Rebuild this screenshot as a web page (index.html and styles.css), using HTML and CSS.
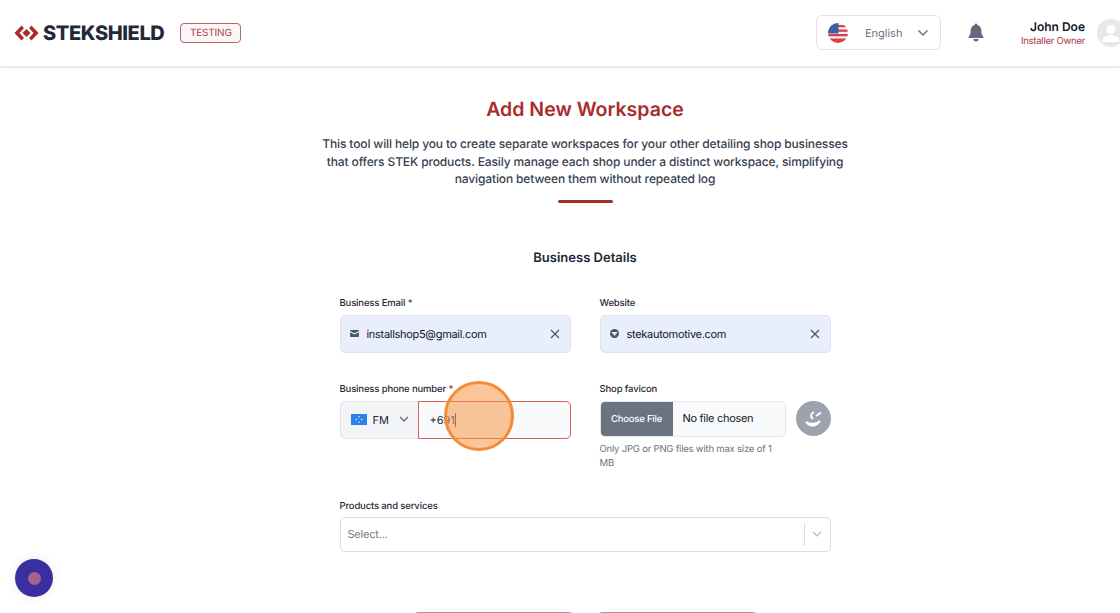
FILE: index.html
```html
<!DOCTYPE html>
<html lang="en">
<head>
    <meta charset="UTF-8">
    <title>Add New Workspace</title>
    <link rel="stylesheet" href="styles.css">
</head>
<body>
    <header class="topbar">
        <div class="brand">
            <svg class="brand-mark" width="25" height="16" viewBox="0 0 25 16">
                <path d="M7.500 0.500 L0.500 8 L7.500 15.500 L10 13 L5.500 8 L10 3 Z" fill="#a82c2c"/>
                <path d="M17.500 0.500 L24.500 8 L17.500 15.500 L15 13 L19.500 8 L15 3 Z" fill="#a82c2c"/>
                <path d="M12.500 4 L16.500 8 L12.500 12 L8.500 8 Z" fill="#a82c2c"/>
            </svg>
            <span class="brand-name">STEKSHIELD</span>
            <span class="env-badge">TESTING</span>
        </div>
        <div class="topbar-right">
            <div class="lang-select">
                <svg class="flag" width="20" height="20" viewBox="0 0 20 20">
                    <defs><clipPath id="flagClip"><circle cx="10" cy="10" r="10"/></clipPath></defs>
                    <g clip-path="url(#flagClip)">
                        <rect width="20" height="20" fill="#f3f3f3"/>
                        <rect y="2" width="20" height="2.300" fill="#d8404a"/>
                        <rect y="6.500" width="20" height="2.300" fill="#d8404a"/>
                        <rect y="11" width="20" height="2.300" fill="#d8404a"/>
                        <rect y="15.500" width="20" height="4.500" fill="#d8404a"/>
                        <rect width="10.500" height="10.500" fill="#3f5fa8"/>
                    </g>
                </svg>
                <span class="lang-name">English</span>
                <svg width="12" height="8" viewBox="0 0 12 8"><path d="M1.500 1.500 L6 6 L10.500 1.500" class="chev"/></svg>
            </div>
            <svg class="bell" width="16" height="19" viewBox="0 0 16 19">
                <path d="M8 0.500 a1.300 1.300 0 0 1 1.300 1.500 C12 2.700 13.400 5 13.400 8 c0 3.500 1 4.700 2.100 6 v1 H0.500 v-1 c1.100-1.300 2.100-2.500 2.100-6 C2.600 5 4 2.700 6.700 2 A1.300 1.300 0 0 1 8 0.500 Z M5.500 16 h5 a2.500 2.500 0 0 1-5 0 Z" fill="#626b79"/>
            </svg>
            <div class="user-info">
                <span class="user-name">John Doe</span>
                <span class="user-role">Installer Owner</span>
            </div>
            <svg class="avatar" width="28" height="28" viewBox="0 0 28 28">
                <circle cx="14" cy="14" r="14" fill="#e8e8e8"/>
                <circle cx="14" cy="10.500" r="4.500" fill="#fff"/>
                <path d="M5.500 23 c0-5 3.500-7 8.500-7 s8.500 2 8.500 7 Z" fill="#fff"/>
            </svg>
        </div>
    </header>

    <main class="page">
        <h1 class="page-title">Add New Workspace</h1>
        <p class="page-intro">This tool will help you to create separate workspaces for your other detailing shop businesses that offers STEK products. Easily manage each shop under a distinct workspace, simplifying navigation between them without repeated log</p>
        <div class="title-rule"></div>

        <h2 class="section-title">Business Details</h2>

        <form class="form">
            <div class="form-row">
                <div class="field">
                    <label class="field-label">Business Email <span class="req">*</span></label>
                    <div class="input filled">
                        <svg class="input-icon" width="9" height="7" viewBox="0 0 10 8"><path d="M0.500 0 h9 a0.500 0.500 0 0 1 0.500 0.500 v0.700 L5 3.800 L0 1.200 V0.500 A0.500 0.500 0 0 1 0.500 0 Z M0 2.500 L5 5 L10 2.500 V7.500 a0.500 0.500 0 0 1-0.500 0.500 h-9 A0.500 0.500 0 0 1 0 7.500 Z" fill="#4b5563"/></svg>
                        <span class="input-text">installshop5@gmail.com</span>
                        <svg class="clear" width="10" height="10" viewBox="0 0 10 10"><path d="M1 1 L9 9 M9 1 L1 9"/></svg>
                    </div>
                </div>
                <div class="field">
                    <label class="field-label">Website</label>
                    <div class="input filled">
                        <svg class="input-icon" width="9" height="9" viewBox="0 0 9 9"><circle cx="4.500" cy="4.500" r="4.500" fill="#4b5563"/><path d="M1.500 3 h6 c0 1-1 1.500-1.500 1.500 L5 7 C3.500 6 3 5 3 4.500 C2 4.500 1.500 4 1.500 3 Z" fill="#e8eefc"/></svg>
                        <span class="input-text">stekautomotive.com</span>
                        <svg class="clear" width="10" height="10" viewBox="0 0 10 10"><path d="M1 1 L9 9 M9 1 L1 9"/></svg>
                    </div>
                </div>
            </div>

            <div class="form-row second">
                <div class="field">
                    <label class="field-label">Business phone number <span class="req">*</span></label>
                    <div class="phone">
                        <div class="phone-country">
                            <svg width="16" height="11" viewBox="0 0 16 11">
                                <rect width="16" height="11" fill="#2f80ed"/>
                                <circle cx="8" cy="2.800" r="0.700" fill="#fff"/>
                                <circle cx="8" cy="8.200" r="0.700" fill="#fff"/>
                                <circle cx="5.300" cy="5.500" r="0.700" fill="#fff"/>
                                <circle cx="10.700" cy="5.500" r="0.700" fill="#fff"/>
                            </svg>
                            <span>FM</span>
                            <svg width="10" height="7" viewBox="0 0 10 7"><path d="M1 1 L5 5 L9 1" class="chev"/></svg>
                        </div>
                        <div class="phone-number"><span>+691</span><span class="caret"></span></div>
                    </div>
                </div>
                <div class="field">
                    <label class="field-label">Shop favicon</label>
                    <div class="favicon-row">
                        <div class="file-input">
                            <span class="file-btn">Choose File</span>
                            <span class="file-name">No file chosen</span>
                        </div>
                        <svg class="favicon-preview" width="35" height="35" viewBox="0 0 35 35">
                            <circle cx="17.500" cy="17.500" r="17.500" fill="#9ca3af"/>
                            <path d="M18 11 C14.500 13 14 16 17 18 M20 15 L25 11.500" class="favicon-mark"/>
                            <path d="M10 21 C13 25 19 27 24 20 C21 23 15 24 10 21 Z" class="favicon-mark"/>
                        </svg>
                    </div>
                    <p class="hint">Only JPG or PNG files with max size of 1 MB</p>
                </div>
            </div>

            <div class="field products">
                <label class="field-label">Products and services</label>
                <div class="select">
                    <span class="select-placeholder">Select...</span>
                    <span class="select-sep"></span>
                    <svg width="10" height="6" viewBox="0 0 10 6"><path d="M1 1 L5 5 L9 1" class="chev light"/></svg>
                </div>
            </div>

            <div class="actions">
                <button type="button" class="btn"></button>
                <button type="button" class="btn"></button>
            </div>
        </form>
    </main>

    <!-- click marker over the phone input -->
    <div class="click-marker"></div>

    <div class="chat-bubble"><span class="chat-dot"></span></div>
</body>
</html>
```

FILE: styles.css
```css
html, body {
    margin: 0;
    padding: 0;
    height: 100%;
    overflow: hidden;
}
body {
    background-color: #ffffff;
    color: #1f2937;
    font-family: Inter, "Liberation Sans", sans-serif;
    text-rendering: geometricPrecision;
}
svg {
    display: block;
    flex: none;
}
.chev {
    fill: none;
    stroke: #6b7280;
    stroke-width: 1.500;
}
.chev.light {
    stroke: #b4b8bf;
    stroke-width: 1.200;
}

/* top bar */
.topbar {
    height: 66px;
    box-sizing: border-box;
    display: flex;
    justify-content: space-between;
    align-items: center;
    padding: 0 0 1px 14px;
    background-color: #ffffff;
    box-shadow: 0 1px 3px rgba(0, 0, 0, 0.16);
}
.brand {
    display: flex;
    align-items: center;
}
.brand-name {
    margin-left: 4px;
    font-size: 20px;
    font-weight: 800;
    letter-spacing: -0.4px;
    color: #1f2a37;
}
.env-badge {
    margin-left: 16px;
    width: 61px;
    height: 20px;
    box-sizing: border-box;
    display: flex;
    justify-content: center;
    align-items: center;
    border: 1px solid #b5686c;
    border-radius: 4px;
    background-color: #fdf6f6;
    font-size: 10px;
    letter-spacing: -0.2px;
    color: #a8444a;
}
.topbar-right {
    display: flex;
    align-items: center;
    margin-right: -5px;
}
.lang-select {
    width: 125px;
    height: 35px;
    box-sizing: border-box;
    display: flex;
    align-items: center;
    padding: 0 11px;
    border: 1px solid #e1e3e7;
    border-radius: 6px;
}
.lang-name {
    margin-left: 17px;
    flex: 1;
    font-size: 11px;
    color: #6b7280;
}
.bell {
    margin-left: 27px;
}
.user-info {
    margin: 3px 0 0 37px;
    display: flex;
    flex-direction: column;
    align-items: flex-end;
}
.user-name {
    font-size: 12px;
    font-weight: 600;
    line-height: 15px;
    color: #111827;
}
.user-role {
    margin-top: 1px;
    font-size: 9.500px;
    letter-spacing: -0.25px;
    line-height: 14px;
    color: #a53a3f;
}
.avatar {
    margin-left: 12px;
}

/* page content */
.page {
    margin-left: 50px;
    padding-top: 32px;
    display: flex;
    flex-direction: column;
    align-items: center;
}
.page-title {
    margin: 0;
    font-size: 19.500px;
    line-height: 22px;
    font-weight: 600;
    color: #a82c2c;
}
.page-intro {
    width: 532px;
    margin: 15px 0 0;
    font-size: 12px;
    letter-spacing: -0.13px;
    font-weight: 500;
    line-height: 17.500px;
    text-align: center;
    color: #374151;
}
.title-rule {
    width: 55px;
    height: 3px;
    margin-top: 12px;
    border-radius: 2px;
    background-color: #a82c2c;
}
.section-title {
    margin: 46px 0 0;
    font-size: 13px;
    line-height: 18px;
    font-weight: 600;
    color: #1f2937;
}

/* form */
.form {
    width: 491px;
    margin-top: 29px;
}
.form-row {
    display: flex;
    gap: 29px;
}
.form-row.second {
    margin-top: 29px;
}
.field {
    width: 231px;
    flex: none;
}
.field-label {
    display: block;
    margin-bottom: 3px;
    font-size: 9.500px;
    letter-spacing: -0.15px;
    line-height: 16px;
    font-weight: 500;
    color: #1f2937;
}
.req {
    color: #a82c2c;
}
.input {
    height: 36px;
    display: flex;
    align-items: center;
    padding: 0 10px 0 9px;
    border: 1px solid #dfe3ea;
    border-radius: 5px;
}
.input.filled {
    background-color: #e8eefc;
}
.input-text {
    flex: 1;
    margin-left: 8px;
    font-size: 11px;
    letter-spacing: -0.3px;
    color: #111827;
}
.clear path {
    fill: none;
    stroke: #4b5563;
    stroke-width: 1.200;
}
.phone {
    display: flex;
    height: 38px;
}
.phone-country {
    width: 78px;
    box-sizing: border-box;
    display: flex;
    align-items: center;
    gap: 6px;
    padding: 0 9px 0 10px;
    border: 1px solid #dfe3ea;
    border-right: none;
    border-radius: 5px 0 0 5px;
    background-color: #f3f4f6;
    font-size: 11px;
    color: #1f2937;
}
.phone-country span {
    flex: 1;
}
.phone-number {
    flex: 1;
    display: flex;
    align-items: center;
    padding-left: 11px;
    border: 1.500px solid #d8605c;
    border-radius: 0 5px 5px 0;
    background-color: #f9fafb;
    font-size: 11px;
    color: #1f2937;
}
.caret {
    width: 1px;
    height: 14px;
    background-color: #374151;
}
.favicon-row {
    display: flex;
    justify-content: space-between;
    align-items: flex-start;
}
.file-input {
    width: 186px;
    height: 36px;
    box-sizing: border-box;
    display: flex;
    border: 1px solid #e5e7eb;
    border-radius: 5px;
    background-color: #f9fafb;
    overflow: hidden;
}
.file-btn {
    width: 72px;
    padding-top: 1px;
    box-sizing: border-box;
    display: flex;
    justify-content: center;
    align-items: center;
    background-color: #6b7280;
    color: #ffffff;
    font-size: 9.500px;
    letter-spacing: -0.2px;
    font-weight: 500;
}
.file-name {
    margin: -1px 0 0 10px;
    align-self: center;
    font-size: 11px;
    letter-spacing: -0.3px;
    color: #111827;
}
.favicon-mark {
    fill: none;
    stroke: #ffffff;
    stroke-width: 2;
}
.hint {
    width: 180px;
    margin: 6px 0 0;
    font-size: 9.500px;
    letter-spacing: -0.2px;
    line-height: 14px;
    color: #6b7280;
}
.products {
    width: 100%;
    margin-top: 28px;
}
.products .field-label {
    margin-bottom: 2px;
}
.select {
    height: 33px;
    display: flex;
    align-items: center;
    padding: 0 8px 0 7px;
    border: 1px solid #d9dce1;
    border-radius: 5px;
}
.select-placeholder {
    flex: 1;
    font-size: 11px;
    letter-spacing: -0.2px;
    color: #757b85;
}
.select-sep {
    width: 1px;
    height: 23px;
    margin-right: 7px;
    background-color: #d9dce1;
}
.actions {
    margin-top: 60px;
    display: flex;
    justify-content: center;
    gap: 23px;
}
.btn {
    width: 161px;
    height: 36px;
    padding: 0;
    border: 1px solid #c9868a;
    border-radius: 5px;
    background-color: #ffffff;
}

/* overlays */
.click-marker {
    position: absolute;
    left: 444px;
    top: 381px;
    width: 70px;
    height: 70px;
    box-sizing: border-box;
    border: 3px solid #f28c38;
    border-radius: 50%;
    background-color: rgba(247, 150, 70, 0.55);
}
.chat-bubble {
    position: fixed;
    left: 15px;
    top: 559px;
    width: 38px;
    height: 38px;
    display: flex;
    justify-content: center;
    align-items: center;
    border-radius: 50%;
    background-color: #3a2ea0;
    box-shadow: 0 0 12px rgba(0, 0, 0, 0.08);
}
.chat-dot {
    width: 13px;
    height: 13px;
    border-radius: 50%;
    background-color: #a5608f;
}
```
